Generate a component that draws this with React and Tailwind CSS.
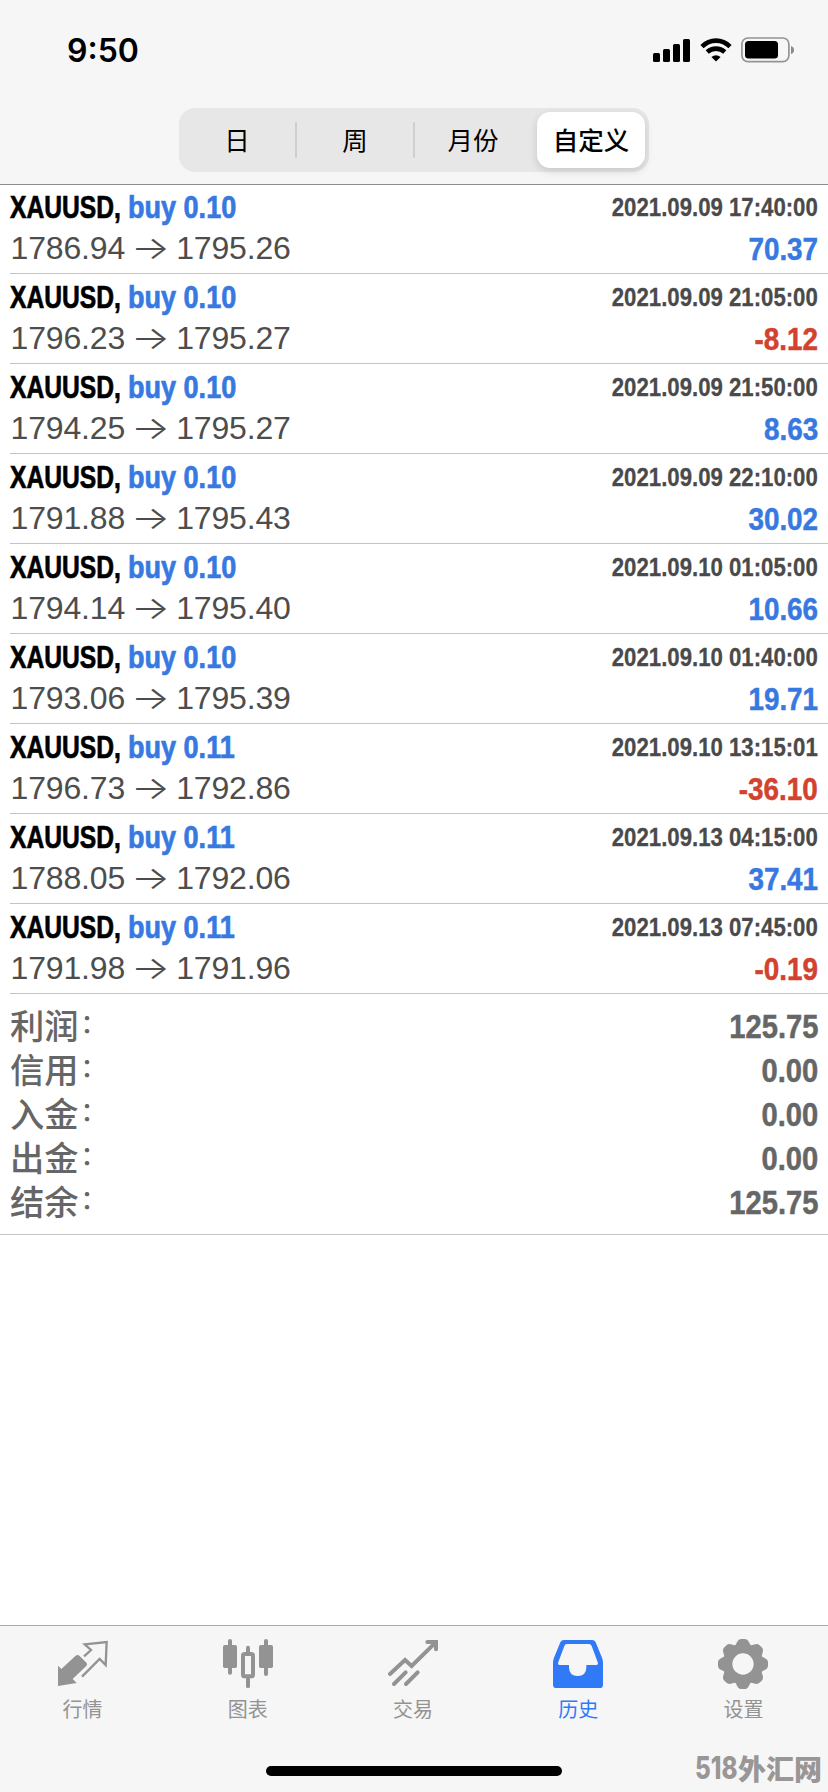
import React, { useState } from 'react';

const periods = ['日', '周', '月份', '自定义'];

const deals = [
  { id: 1, volume: '0.10', open: '1786.94', close: '1795.26', time: '2021.09.09 17:40:00', profit: '70.37' },
  { id: 2, volume: '0.10', open: '1796.23', close: '1795.27', time: '2021.09.09 21:05:00', profit: '-8.12' },
  { id: 3, volume: '0.10', open: '1794.25', close: '1795.27', time: '2021.09.09 21:50:00', profit: '8.63' },
  { id: 4, volume: '0.10', open: '1791.88', close: '1795.43', time: '2021.09.09 22:10:00', profit: '30.02' },
  { id: 5, volume: '0.10', open: '1794.14', close: '1795.40', time: '2021.09.10 01:05:00', profit: '10.66' },
  { id: 6, volume: '0.10', open: '1793.06', close: '1795.39', time: '2021.09.10 01:40:00', profit: '19.71' },
  { id: 7, volume: '0.11', open: '1796.73', close: '1792.86', time: '2021.09.10 13:15:01', profit: '-36.10' },
  { id: 8, volume: '0.11', open: '1788.05', close: '1792.06', time: '2021.09.13 04:15:00', profit: '37.41' },
  { id: 9, volume: '0.11', open: '1791.98', close: '1791.96', time: '2021.09.13 07:45:00', profit: '-0.19' }
];

const summary = [
  { label: '利润', value: '125.75' },
  { label: '信用', value: '0.00' },
  { label: '入金', value: '0.00' },
  { label: '出金', value: '0.00' },
  { label: '结余', value: '125.75' }
];

const QuotesIcon = () => (
  <svg className="w-[50px] h-[50px]" viewBox="0 0 150 150">
    <path d="M0 80L10 90L52 51Q59 45 65 51L84 70Q90 76 84 82L44 120L56 132L0 141Z" fill="currentColor" />
    <path d="M78 52L99 33L80 16L146 9L143 78L125 60L72 113" fill="none" stroke="currentColor" strokeWidth="7" />
  </svg>
);

const ChartIcon = () => (
  <svg className="w-[50px] h-[50px]" viewBox="0 0 150 150" fill="currentColor">
    <rect x="15" y="0" width="12" height="107" rx="6" />
    <rect x="0" y="18" width="42" height="69" rx="5" />
    <rect x="69" y="20" width="12" height="30" rx="6" />
    <rect x="69" y="110" width="12" height="38" rx="6" />
    <rect x="60" y="45" width="30" height="67" rx="5" fill="none" stroke="currentColor" strokeWidth="12" />
    <rect x="123" y="0" width="12" height="111" rx="6" />
    <rect x="108" y="18" width="42" height="69" rx="5" />
  </svg>
);

const TradeIcon = () => (
  <svg className="w-[50px] h-[50px]" viewBox="0 0 150 150" fill="none" stroke="currentColor" strokeWidth="12" strokeLinecap="round">
    <path d="M6 105L51 63L71 81L143 10" />
    <path d="M118 9H144V31" />
    <path d="M18 135L53 100" />
    <path d="M54 135L89 100" />
  </svg>
);

const HistoryIcon = () => (
  <svg className="w-[50px] h-[50px]" viewBox="0 0 150 150">
    <path
      fill="currentColor"
      fillRule="evenodd"
      d="M33 3H117Q125 3 128 10L147 56Q150 63 150 71V137Q150 147 140 147H10Q0 147 0 137V71Q0 63 3 56L22 10Q25 3 33 3ZM42 15Q36 15 34 21L15 72Q14 78 20 78H48V86Q49 111 74 111Q99 111 100 86V78H130Q136 78 135 72L116 21Q114 15 108 15Z"
    />
  </svg>
);

const SettingsIcon = () => (
  <svg className="w-[50px] h-[50px]" viewBox="-75 -75 150 150" fill="currentColor">
    <circle r="46" fill="none" stroke="currentColor" strokeWidth="28" />
    {[0, 45, 90, 135, 180, 225, 270, 315].map((angle) => (
      <path key={angle} transform={`rotate(${angle})`} d="M-25 -54Q-21 -58 -18 -65Q-13 -75 -5 -75H5Q13 -75 18 -65Q21 -58 25 -54Z" />
    ))}
  </svg>
);

const tabs = [
  { id: 'quotes', label: '行情', Icon: QuotesIcon },
  { id: 'chart', label: '图表', Icon: ChartIcon },
  { id: 'trade', label: '交易', Icon: TradeIcon },
  { id: 'history', label: '历史', Icon: HistoryIcon },
  { id: 'settings', label: '设置', Icon: SettingsIcon }
];

const StatusBar = () => (
  <div className="flex justify-between items-center h-[100px] pl-[67px] pr-[33px]">
    <span className="pt-px font-['Inter',sans-serif] font-semibold text-[32px] leading-none text-black">9:50</span>
    <div className="flex items-center">
      <svg className="w-[37px] h-[23px]" viewBox="0 0 37 23">
        <rect x="0" y="14" width="7" height="9" rx="1.5" />
        <rect x="10" y="10" width="7" height="13" rx="1.5" />
        <rect x="20" y="5" width="7" height="18" rx="1.5" />
        <rect x="30" y="0" width="7" height="23" rx="1.5" />
      </svg>
      <svg className="w-[32px] h-[24px] ml-[10px]" viewBox="0 0 32 24">
        <path d="M2 8.6Q8 2.6 16 2.6T30 8.6" fill="none" stroke="#000" strokeWidth="4.6" />
        <path d="M7.2 14Q11 10.6 16 10.6T24.8 14" fill="none" stroke="#000" strokeWidth="4.6" />
        <path d="M11.4 19Q16 15.6 20.6 19L16 23.6Z" />
      </svg>
      <svg className="w-[54px] h-[26px] ml-[9px]" viewBox="0 0 54 26">
        <rect x="0.9" y="1" width="47" height="23.6" rx="6" fill="none" stroke="#949494" strokeWidth="1.7" />
        <rect x="4" y="4" width="33" height="17.5" rx="3.5" />
        <path d="M50 9Q53 10 53 13T50 17Z" fill="#8a8a8a" />
      </svg>
    </div>
  </div>
);

const DealRow = ({ deal }) => (
  <div className="ml-[10px] h-[90px] pr-[10px] pt-[5px] flex justify-between border-b border-[#c4c4c4] whitespace-nowrap">
    <div>
      <div className="flex h-[37px] items-center font-bold text-[32px] leading-[37px] [-webkit-text-stroke:0.7px_currentColor]">
        <span className="w-[118px] text-black origin-left scale-x-[0.77]">XAUUSD,</span>
        <span className="text-[#3779e1] origin-left scale-x-[0.845]">buy {deal.volume}</span>
      </div>
      <div className="flex h-[44px] items-center pl-[0.5px] text-[32px] text-[#4d4d4d] tracking-[-0.15px]">
        <span>{deal.open}</span>
        <span className="w-[51px] text-center font-['Inter',sans-serif] font-light scale-x-[1.28]">→</span>
        <span>{deal.close}</span>
      </div>
    </div>
    <div className="flex flex-col items-end font-bold">
      <span className="h-[37px] leading-[37px] text-[25.5px] text-[#4a4a4a] origin-right scale-x-[0.87] [-webkit-text-stroke:0.3px_currentColor]">
        {deal.time}
      </span>
      <span
        className={`h-[44px] leading-[46px] text-[32px] origin-right scale-x-[0.87] [-webkit-text-stroke:0.5px_currentColor] ${
          deal.profit.startsWith('-') ? 'text-[#d3412f]' : 'text-[#3779e1]'
        }`}
      >
        {deal.profit}
      </span>
    </div>
  </div>
);

const App = () => {
  const [period, setPeriod] = useState('自定义');
  const [activeTab, setActiveTab] = useState('history');

  return (
    <div className="relative flex flex-col w-[828px] h-[1792px] overflow-hidden bg-white font-['Liberation_Sans','Noto_Sans_CJK_SC',sans-serif]">
      {/* Header */}
      <div className="h-[185px] -mb-px shrink-0 bg-[#f6f6f6] border-b border-[#8c8c8c]">
        <StatusBar />
        <div className="flex w-[470px] h-[64px] mt-2 ml-[179px] py-1 pr-1 rounded-[16px] bg-[#e7e7e7] font-['Noto_Sans_CJK_SC',sans-serif]">
          {periods.map((item, index) => (
            <React.Fragment key={item}>
              {(index === 1 || index === 2) && <div className="w-[2px] h-[36px] self-center bg-[#cfcfcf] rounded-full" />}
              <button
                onClick={() => setPeriod(item)}
                className={`pb-[3px] rounded-[13px] text-[25.5px] leading-none text-black ${
                  period === item
                    ? 'w-[108px] ml-auto bg-white font-medium shadow-[0_3px_8px_rgba(0,0,0,0.14)]'
                    : 'w-[116px]'
                }`}
              >
                {item}
              </button>
            </React.Fragment>
          ))}
        </div>
      </div>

      {/* Deals */}
      <div className="shrink-0">
        {deals.map((deal) => (
          <DealRow key={deal.id} deal={deal} />
        ))}
      </div>

      {/* Totals */}
      <div className="shrink-0 py-[10px] px-[10px] border-b border-[#c4c4c4] text-[#666666]">
        {summary.map((row) => (
          <div key={row.label} className="flex justify-between items-center h-[44px]">
            <span className="flex items-center h-[44px] pt-[2px] font-medium text-[34.3px] leading-[38px]">
              <span>{row.label}</span>
              <span className="ml-[2px] text-[26px] -translate-y-[3px]">：</span>
            </span>
            <span className="pt-[2px] font-bold text-[33.5px] leading-[42px] origin-right scale-x-[0.87] [-webkit-text-stroke:0.5px_currentColor]">
              {row.value}
            </span>
          </div>
        ))}
      </div>

      {/* Tab bar */}
      <div className="mt-auto h-[167px] shrink-0 flex flex-col items-center bg-[#f6f6f6] border-t border-[#a9a9a9]">
        <div className="flex w-[826px] mr-[2px] pt-[13px]">
          {tabs.map(({ id, label, Icon }) => (
            <button
              key={id}
              onClick={() => setActiveTab(id)}
              className={`flex-1 flex flex-col items-center ${activeTab === id ? 'text-[#317af7]' : 'text-[#939393]'}`}
            >
              <Icon />
              <span className="mt-[5px] h-[30px] font-['Noto_Sans_CJK_SC',sans-serif] text-[20px] leading-[30px]">{label}</span>
            </button>
          ))}
        </div>
        <div className="w-[296px] h-[10px] mt-[42px] rounded-full bg-black" />
      </div>

      {/* Site mark over the tab bar */}
      <div className="absolute right-[6px] bottom-[9px] flex items-center h-[30px] font-['Noto_Sans_CJK_SC',sans-serif] font-black text-[28px] leading-[30px] text-[#9a9696]">
        <span className="w-[43px] origin-left scale-x-[0.78] font-['Inter','Liberation_Sans',sans-serif] font-extrabold text-[31px]">518</span>
        <span>外汇网</span>
      </div>
    </div>
  );
};

export default App;
